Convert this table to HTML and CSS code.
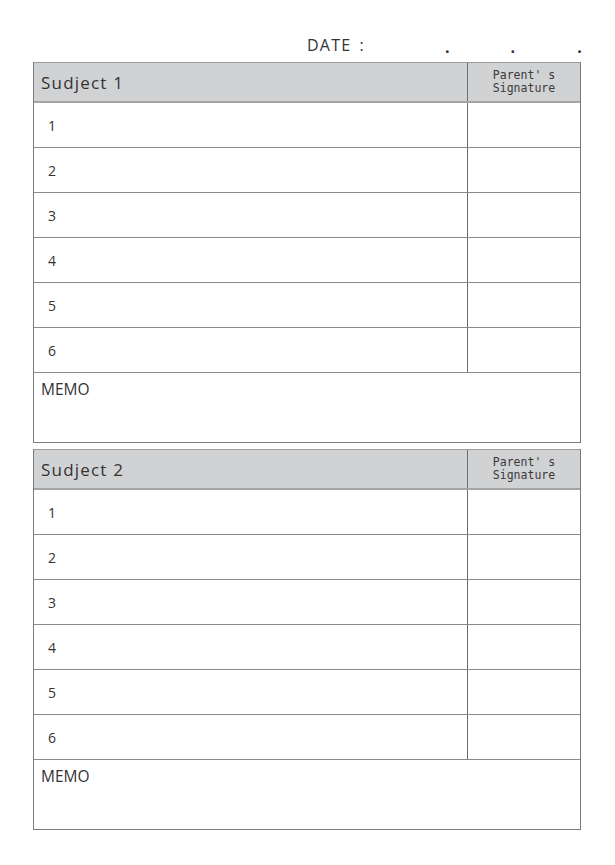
FILE: index.html
```html
<!DOCTYPE html>
<html>
<head>
<meta charset="utf-8">
<link rel="stylesheet" href="styles.css">
</head>
<body>
<div class="page">
  <div class="date">
    <span class="date-label">DATE :</span>
    <span class="dot d1">.</span>
    <span class="dot d2">.</span>
    <span class="dot d3">.</span>
  </div>

  <div class="sheet">
    <div class="head">
      <div class="subject">Sudject 1</div>
      <div class="sig">Parent' s<br>Signature</div>
    </div>
    <div class="row"><div class="num">1</div><div class="box"></div></div>
    <div class="row"><div class="num">2</div><div class="box"></div></div>
    <div class="row"><div class="num">3</div><div class="box"></div></div>
    <div class="row"><div class="num">4</div><div class="box"></div></div>
    <div class="row"><div class="num">5</div><div class="box"></div></div>
    <div class="row"><div class="num">6</div><div class="box"></div></div>
    <div class="memo">MEMO</div>
  </div>

  <div class="sheet second">
    <div class="head">
      <div class="subject">Sudject 2</div>
      <div class="sig">Parent' s<br>Signature</div>
    </div>
    <div class="row"><div class="num">1</div><div class="box"></div></div>
    <div class="row"><div class="num">2</div><div class="box"></div></div>
    <div class="row"><div class="num">3</div><div class="box"></div></div>
    <div class="row"><div class="num">4</div><div class="box"></div></div>
    <div class="row"><div class="num">5</div><div class="box"></div></div>
    <div class="row"><div class="num">6</div><div class="box"></div></div>
    <div class="memo">MEMO</div>
  </div>
</div>
</body>
</html>
```

FILE: styles.css
```css
html, body {
  margin: 0;
  padding: 0;
  background: #ffffff;
}
body {
  font-family: "Open Sans", "Liberation Sans", sans-serif;
  color: #333333;
}
.page {
  width: 548px;
  margin-left: 33px;
  padding-top: 30px;
}
.date {
  height: 32px;
  display: flex;
  align-items: flex-start;
  font-size: 16px;
  line-height: 30px;
  color: #333;
}
.date span {
  flex-shrink: 0;
  white-space: nowrap;
}
.date-label {
  margin-left: 274px;
  letter-spacing: 1.2px;
  word-spacing: 3px;
}
.dot {
  font-size: 16px;
  font-weight: bold;
  line-height: 34px;
}
.d1 { margin-left: 80px; }
.d2 { margin-left: 61px; }
.d3 { margin-left: 62px; }

.sheet {
  border: 1px solid #7b7b7b;
  border-top-color: #9b9b9b;
}
.second {
  margin-top: 6px;
}
.head {
  display: grid;
  grid-template-columns: 433px 1fr;
  height: 38px;
  background: #d1d2d4;
  border-bottom: 2px solid #a4a4a4;
}
.subject {
  display: flex;
  align-items: center;
  padding-left: 7px;
  font-size: 17px;
  letter-spacing: 1.2px;
  color: #333;
}
.sig {
  border-left: 1px solid #6e6e6e;
  font-family: "DejaVu Sans Mono", "Liberation Mono", monospace;
  font-size: 11.5px;
  line-height: 13px;
  text-align: center;
  padding-top: 6px;
  color: #3a3a3a;
}
.row {
  display: grid;
  grid-template-columns: 433px 1fr;
  height: 44px;
  border-bottom: 1px solid #8a8a8a;
}
.num {
  display: flex;
  align-items: center;
  padding-left: 14px;
  font-size: 14px;
  color: #333;
}
.box {
  border-left: 1px solid #6e6e6e;
}
.memo {
  height: 64px;
  padding: 5px 0 0 7px;
  font-size: 15.5px;
  color: #333;
}
```
